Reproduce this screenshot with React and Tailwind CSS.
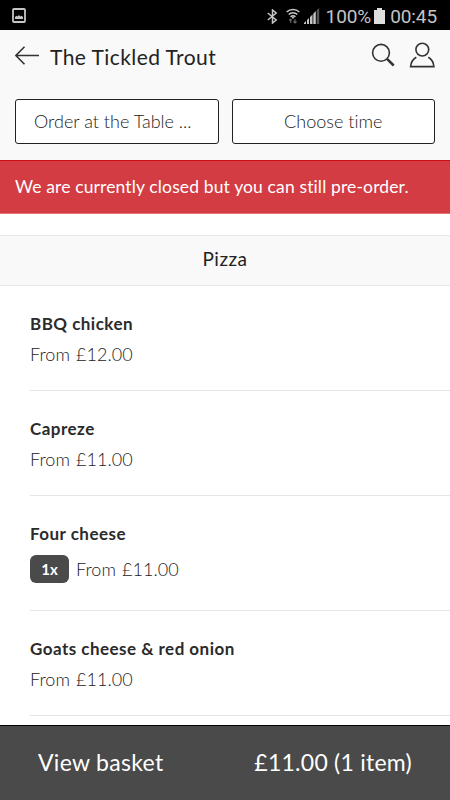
import React from 'react';

const menuItems = [
  { name: 'BBQ chicken', price: '£12.00' },
  { name: 'Capreze', price: '£11.00' },
  { name: 'Four cheese', price: '£11.00', quantity: 1 },
  { name: 'Goats cheese & red onion', price: '£11.00' },
];

const StatusBar = () => (
  <div className="flex h-[30px] shrink-0 items-center bg-black pt-0.5 pl-3 pr-[13px] text-[#c4c4c4]">
    <svg className="mb-px" width="14" height="15" viewBox="0 0 14 15" fill="none">
      <rect x="1" y="1" width="12" height="13" rx="1" stroke="currentColor" strokeWidth="1.8" />
      <path d="M3 11V9l1.4-1.2 1.2.6L7 7l1.3 1.4 1.3-.6L11 9v2z" fill="currentColor" />
    </svg>
    <div className="ml-auto flex items-center">
      <svg width="11" height="15" viewBox="0 0 11 15" fill="none" stroke="currentColor" strokeWidth="1.5">
        <path d="M.8 4l8.4 7L5.5 14V1l3.7 3L.8 11" />
      </svg>
      <svg className="ml-2" width="14" height="16" viewBox="0 0 14 16" fill="none">
        <g stroke="currentColor" strokeWidth="1.6">
          <path d="M.7 4C4 .6 10 .6 13.3 4" />
          <path d="M2.7 6.5c2.4-2.3 6.2-2.3 8.6 0" />
          <path d="M4.6 8.9c1.4-1.3 3.4-1.3 4.8 0" />
        </g>
        <circle cx="7" cy="9.6" r="1.1" fill="currentColor" />
        <path d="M4.7 15v-4M3 12.5L4.7 11l1.2 1.5M9 11v4M7.5 13.5L9 15l1.6-1.5" stroke="#666" strokeWidth="1.1" />
      </svg>
      <svg className="ml-1" width="16" height="16" viewBox="0 0 16 16" fill="currentColor">
        <path d="M0 16v-1l2-2v3zM3 16v-4l2-2v6zM6 16V9l2.5-2.5V16zM9.3 16V5.7L11.8 3v13z" />
        <path d="M12.7 16V2.3L15.2 0v16z" fill="#555" />
      </svg>
      <span className="ml-1.5 font-[Roboto] text-[19px] leading-none tracking-[-0.1px]">100%</span>
      <svg className="ml-[3px]" width="11" height="16" viewBox="0 0 11 16" fill="#dedede">
        <path d="M3 0h5v2h3v14H0V2h3z" />
      </svg>
      <span className="ml-[5px] font-[Roboto] text-[19px] leading-none tracking-[-0.1px]">00:45</span>
    </div>
  </div>
);

const Header = () => (
  <header className="h-[130px] shrink-0 bg-[#f9f9f9] px-[15px]">
    <div className="flex h-[50px] items-center">
      <svg width="24" height="19" viewBox="0 0 24 19" fill="none" stroke="#333" strokeWidth="1.6">
        <path d="M24 9.5H1M9.5.8L.9 9.5l8.6 8.7" />
      </svg>
      <h1 className="ml-[11px] pt-0.5 text-[21px] leading-none tracking-[0.43px] text-[#222]">The Tickled Trout</h1>
      <svg className="ml-auto" width="24" height="24" viewBox="0 0 24 24" fill="none" stroke="#333">
        <circle cx="10" cy="9.8" r="8.4" strokeWidth="1.6" />
        <path d="M16 15.8l6.7 6.7" strokeWidth="2.5" />
      </svg>
      <svg className="ml-3.5" width="26" height="26" viewBox="0 0 26 26" fill="none" stroke="#333" strokeWidth="1.6">
        <circle cx="13.3" cy="7.6" r="6.4" />
        <path d="M7.3 15.2C4 17 2 20.2 1.6 24.6h23.3c-.4-4.4-2.4-7.6-5.6-9.4" />
      </svg>
    </div>
    <div className="mt-[19px] grid grid-cols-2 gap-[13px] text-[18px] font-light text-[#222]">
      <button className="h-[45px] rounded-[3px] border border-[#222] bg-white pr-2 pb-px">
        Order at the Table ...
      </button>
      <button className="h-[45px] rounded-[3px] border border-[#222] bg-white pb-px tracking-[0.03px] [font-variant-ligatures:none]">
        Choose time
      </button>
    </div>
  </header>
);

const MenuRow = ({ item }) => (
  <li className={`ml-[30px] border-b border-[#e5e5e5] pt-7 ${item.quantity ? 'h-[115px]' : 'h-[105px]'}`}>
    <h3 className="text-[17px] leading-5 font-bold tracking-[0.47px] text-[#2b2b2b]">{item.name}</h3>
    <div className={`flex items-center ${item.quantity ? 'mt-[11px] h-7' : 'mt-2.5 h-5'}`}>
      {item.quantity && (
        <span className="mr-[7px] flex h-7 w-[39px] items-center justify-center rounded-md bg-[#4a4a4a] text-[15px] font-bold text-white">
          {item.quantity}x
        </span>
      )}
      <span className="text-lg leading-5 font-light tracking-[0.07px] text-[#222] [word-spacing:1px]">
        From {item.price}
      </span>
    </div>
  </li>
);

export default function App() {
  return (
    <div className="flex h-[800px] w-[450px] flex-col overflow-hidden bg-white font-[Lato,sans-serif]">
      <StatusBar />
      <Header />
      <div className="flex h-[54px] shrink-0 items-center border-t border-b border-t-[#d00c18] border-b-[#df7479] bg-[#d33c43] pt-px pl-[15px] text-[17.5px] tracking-[0.13px] text-white">
        We are currently closed but you can still pre-order.
      </div>

      {/* Menu */}
      <main className="min-h-0 flex-1 overflow-hidden pt-[21px]">
        <h2 className="flex h-[51px] items-center justify-center border-y border-[#e8e8e8] bg-[#f9f9f9] pb-0.5 text-[19px] tracking-[0.5px] text-[#222]">
          Pizza
        </h2>
        <ul>
          {menuItems.map((item) => (
            <MenuRow key={item.name} item={item} />
          ))}
        </ul>
      </main>

      {/* Basket */}
      <footer className="flex h-[75px] shrink-0 items-center justify-between border-t border-black bg-[#4a4a4a] pb-0.5 pl-[38px] pr-[38px] text-[23px] text-white">
        <span className="tracking-[0.3px]">View basket</span>
        <span className="tracking-[0.25px]">£11.00 (1 item)</span>
      </footer>
    </div>
  );
}
